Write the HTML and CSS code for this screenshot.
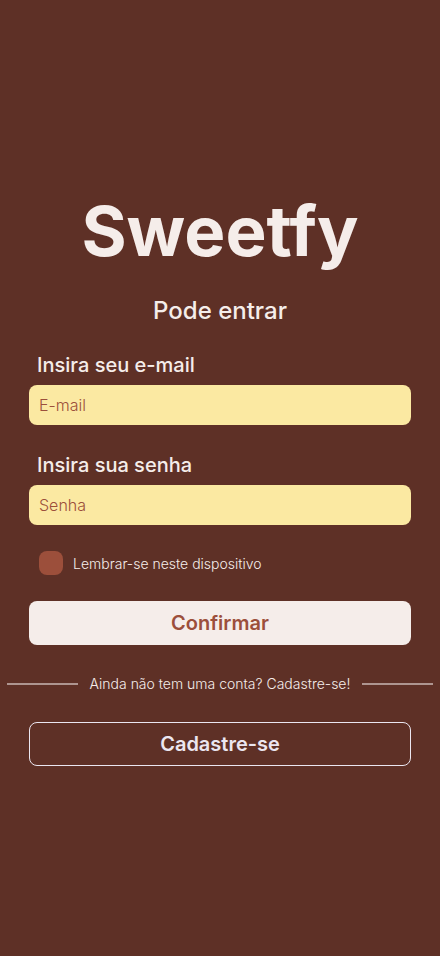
FILE: index.html
```html
<!DOCTYPE html>
<html lang="pt-BR">
<head>
  <meta charset="utf-8">
  <meta name="viewport" content="width=device-width, initial-scale=1">
  <title>Sweetfy</title>
  <link rel="stylesheet" href="styles.css">
</head>
<body>
  <main class="login">
    <h1 class="brand">Sweetfy</h1>
    <h2 class="subtitle">Pode entrar</h2>
    <form class="form">
      <div class="field">
        <label class="field-label" for="email">Insira seu e-mail</label>
        <input class="field-input" id="email" type="email" placeholder="E-mail">
      </div>
      <div class="field">
        <label class="field-label" for="password">Insira sua senha</label>
        <input class="field-input" id="password" type="password" placeholder="Senha">
      </div>
      <div class="remember">
        <input class="remember-box" id="remember" type="checkbox">
        <label class="remember-label" for="remember">Lembrar-se neste dispositivo</label>
      </div>
      <button class="button button-primary" type="submit">Confirmar</button>
    </form>
    <p class="divider">Ainda não tem uma conta? Cadastre-se!</p>
    <div class="signup">
      <button class="button button-outline" type="button">Cadastre-se</button>
    </div>
  </main>
</body>
</html>
```

FILE: styles.css
```css
* {
  box-sizing: border-box;
}

body {
  margin: 0;
  min-height: 100vh;
  display: flex;
  flex-direction: column;
  justify-content: center;
  background: #5e3026;
  color: #f5edea;
  font-family: Inter, "Open Sans", sans-serif;
}

input,
button {
  font-family: inherit;
}

.brand {
  margin: 0 0 24px;
  font-size: 69px;
  font-weight: 700;
  line-height: 82px;
  text-align: center;
}

.subtitle {
  margin: 0 0 28px;
  font-size: 24px;
  font-weight: 500;
  line-height: 29px;
  text-align: center;
}

.form {
  display: flex;
  flex-direction: column;
  padding: 0 29px;
}

.field {
  display: flex;
  flex-direction: column;
  gap: 8px;
}

.field + .field {
  margin-top: 28px;
}

.field-label {
  padding-left: 8px;
  font-size: 20px;
  font-weight: 500;
  line-height: 24px;
}

.field-input {
  width: 100%;
  height: 40px;
  padding: 0 10px;
  border: 0;
  border-radius: 8px;
  background: #fbe9a2;
  color: #9c4f3b;
  font-size: 16px;
  font-weight: 300;
}

.field-input::placeholder {
  color: #9c4f3b;
  opacity: 1;
}

.remember {
  display: flex;
  align-items: center;
  gap: 10px;
  margin: 26px 0;
  padding-left: 10px;
}

.remember-box {
  appearance: none;
  width: 24px;
  height: 24px;
  margin: 0;
  border-radius: 8px;
  background: #9c4f3b;
}

.remember-box:checked {
  box-shadow: inset 0 0 0 6px #9c4f3b;
  background: #f5edea;
}

.remember-label,
.divider {
  font-size: 14px;
  font-weight: 300;
  line-height: 19px;
}

.button {
  width: 100%;
  height: 44px;
  border: 0;
  border-radius: 8px;
  font-size: 20px;
  font-weight: 600;
}

.button-primary {
  background: #f5edea;
  color: #9c4f3b;
}

.divider {
  display: flex;
  align-items: center;
  gap: 12px;
  margin: 29px 7px;
}

.divider::before,
.divider::after {
  content: "";
  flex: 1;
  height: 2px;
  background: #ae9590;
}

.signup {
  padding: 0 29px;
}

.button-outline {
  border: 1px solid #ebe6f0;
  background: transparent;
  color: #ebe6f0;
}
```
